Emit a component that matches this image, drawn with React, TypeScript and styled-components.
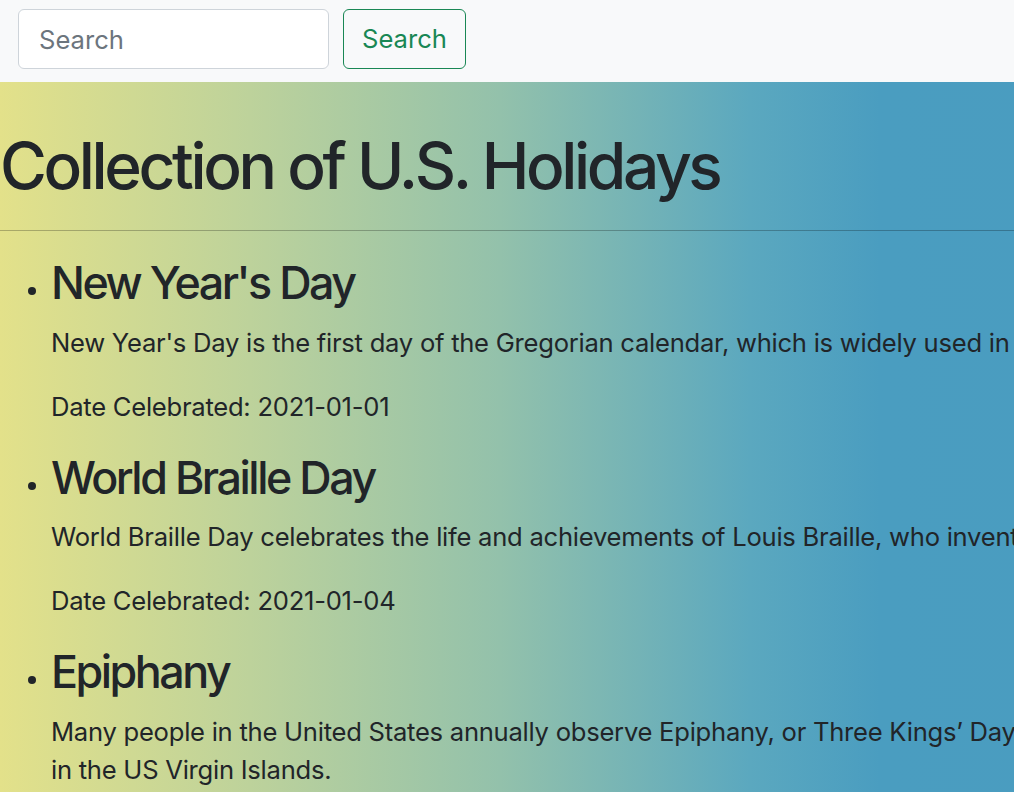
import React from "react";
import styled, { createGlobalStyle } from "styled-components";

const Global = createGlobalStyle`
  html, body { margin: 0; padding: 0; overflow-x: hidden; }
  ::-webkit-scrollbar { width: 0; height: 0; }
  body {
    font-family: Inter, "Noto Sans", "Liberation Sans", sans-serif;
    font-size: 25.6px;
    line-height: 1.5;
    letter-spacing: -0.01em;
    color: #212529;
  }
  * { box-sizing: border-box; }
`;

const Page = styled.div`
  width: 1451px;
`;

const NavBar = styled.nav`
  display: flex;
  align-items: center;
  gap: 14px;
  height: 82px;
  padding: 0 18px 4px;
  background: #f8f9fa;
`;

const SearchInput = styled.input`
  width: 311px;
  height: 60px;
  padding: 0 20px;
  border: 1.6px solid #ced4da;
  border-radius: 6px;
  background: #fff;
  font: inherit;
  color: #495057;
  &::placeholder { color: #6c757d; }
`;

const SearchButton = styled.button`
  width: 123px;
  height: 60px;
  border: 1.6px solid #198754;
  border-radius: 6px;
  background: transparent;
  color: #198754;
  font: inherit;
`;

const Main = styled.main`
  padding-top: 46px;
  background: linear-gradient(
    90deg,
    #e3e18a 0px,
    #bdd29b 250px,
    #93c1ab 500px,
    #5ba8bf 750px,
    #4a9dc0 880px,
    #4a9bc0 1451px
  );
`;

const Title = styled.h1`
  margin: 0 0 12.8px;
  font-size: 64px;
  font-weight: 500;
  line-height: 1.2;
  letter-spacing: -0.053em;
`;

const Rule = styled.hr`
  margin: 25.6px 0;
  border: 0;
  border-top: 1.6px solid rgba(0, 0, 0, 0.25);
`;

const List = styled.ul`
  margin: 0;
  padding-left: 51px;
  padding-bottom: 40px;
`;

const Item = styled.li``;

const ItemTitle = styled.h3`
  margin: 0 0 12.8px;
  font-size: 44.8px;
  font-weight: 500;
  line-height: 1.2;
  letter-spacing: -0.055em;
`;

const Text = styled.p`
  margin: 0 0 25.6px;
`;

const holidays = [
  {
    name: "New Year's Day",
    desc: "New Year's Day is the first day of the Gregorian calendar, which is widely used in many countries such as the USA.",
    date: "2021-01-01",
  },
  {
    name: "World Braille Day",
    desc: "World Braille Day celebrates the life and achievements of Louis Braille, who invented the Braille system.",
    date: "2021-01-04",
  },
  {
    name: "Epiphany",
    desc: "Many people in the United States annually observe Epiphany, or Three Kings’ Day, on January 6. It is a public holiday in the US Virgin Islands.",
    date: "2021-01-06",
  },
];

export default function App() {
  return (
    <Page>
      <Global />
      <NavBar>
        <SearchInput placeholder="Search" />
        <SearchButton>Search</SearchButton>
      </NavBar>
      <Main>
        <Title>Collection of U.S. Holidays</Title>
        <Rule />
        <List>
          {holidays.map((h) => (
            <Item key={h.name}>
              <ItemTitle>{h.name}</ItemTitle>
              <Text>{h.desc}</Text>
              <Text>Date Celebrated: {h.date}</Text>
            </Item>
          ))}
        </List>
      </Main>
    </Page>
  );
}
